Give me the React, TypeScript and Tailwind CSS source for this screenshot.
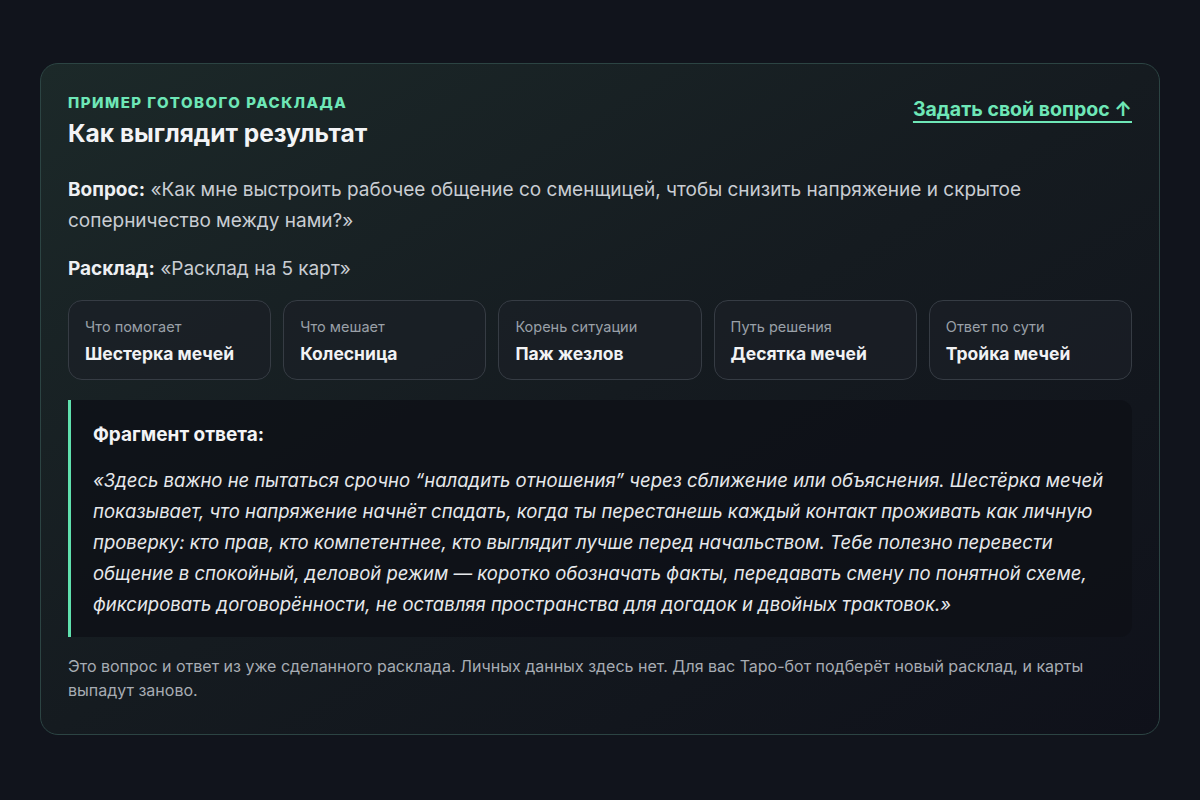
import React from "react";

const CARDS = [
  { label: "Что помогает", value: "Шестерка мечей" },
  { label: "Что мешает", value: "Колесница" },
  { label: "Корень ситуации", value: "Паж жезлов" },
  { label: "Путь решения", value: "Десятка мечей" },
  { label: "Ответ по сути", value: "Тройка мечей" },
];

export default function App() {
  return (
    <div className="min-h-[800px] w-full bg-[#11141c] px-10 pt-[63px] pb-10" style={{ fontFamily: "Inter, 'Noto Sans', sans-serif" }}>
      <div className="rounded-[18px] border border-[#2c4443] bg-gradient-to-br from-[#1c2929] via-[#151b20] to-[#0f111a] px-[27px] pt-[29px] pb-[32px]">
        <div className="flex items-start justify-between">
          <div>
            <div className="text-[15px] font-extrabold uppercase leading-[20px] tracking-[0.1em] text-[#6ee7b7]">Пример готового расклада</div>
            <h2 className="mt-[4px] text-[24.5px] font-bold leading-[32px] text-[#f3f4f6]">Как выглядит результат</h2>
          </div>
          <a href="#" className="mt-[3px] text-[19.5px] font-bold leading-[26px] text-[#6ee7b7] underline decoration-2 underline-offset-[5px]">Задать свой вопрос ↑</a>
        </div>

        <p className="mt-[25px] text-[19px] leading-[31px] text-[#c9cdd3]">
          <span className="font-bold text-[#eef0f3]">Вопрос:</span> «Как мне выстроить рабочее общение со сменщицей, чтобы снизить напряжение и скрытое соперничество между нами?»
        </p>
        <p className="mt-[17px] text-[19px] leading-[31px] text-[#c9cdd3]">
          <span className="font-bold text-[#eef0f3]">Расклад:</span> «Расклад на 5 карт»
        </p>

        <div className="mt-[16px] grid grid-cols-5 gap-3">
          {CARDS.map(c => (
            <div key={c.label} className="h-[80px] rounded-[14px] border border-[#363c44] bg-[#1b2026]/70 px-4 pt-[16px]">
              <div className="text-[14.5px] leading-[20px] text-[#9aa0a8]">{c.label}</div>
              <div className="mt-[5px] text-[17.5px] font-bold leading-[24px] text-[#f1f2f4]">{c.value}</div>
            </div>
          ))}
        </div>

        <div className="mt-[20px] rounded-r-[12px] border-l-[3px] border-[#5fe0ad] bg-[#0e1017]/80 pl-[22px] pr-6 pt-[23px] pb-[17px]">
          <div className="text-[19px] font-bold leading-[24px] text-[#f3f4f6]">Фрагмент ответа:</div>
          <p className="mt-[18px] text-[18.5px] italic leading-[31px] text-[#e6e8eb]">
            «Здесь важно не пытаться срочно “наладить отношения” через сближение или объяснения. Шестёрка мечей показывает, что напряжение начнёт спадать, когда ты перестанешь каждый контакт проживать как личную проверку: кто прав, кто компетентнее, кто выглядит лучше перед начальством. Тебе полезно перевести общение в спокойный, деловой режим — коротко обозначать факты, передавать смену по понятной схеме, фиксировать договорённости, не оставляя пространства для догадок и двойных трактовок.»
          </p>
        </div>

        <p className="mt-[17px] text-[16px] leading-[24px] text-[#a7acb3]">
          Это вопрос и ответ из уже сделанного расклада. Личных данных здесь нет. Для вас Таро-бот подберёт новый расклад, и карты выпадут заново.
        </p>
      </div>
    </div>
  );
}
